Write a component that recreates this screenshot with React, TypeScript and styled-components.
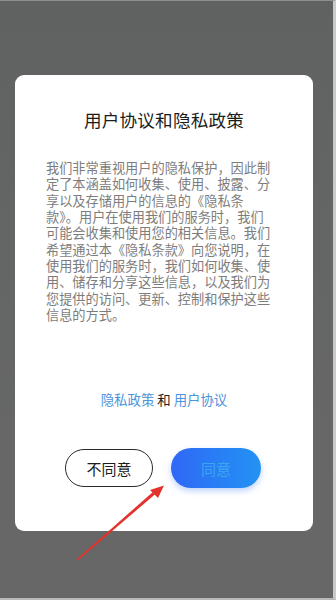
import React from 'react';
import styled, { createGlobalStyle } from 'styled-components';

const GlobalStyle = createGlobalStyle`
  html, body {
    margin: 0;
    padding: 0;
    background: #646665;
  }
  body {
    font-family: "Noto Sans CJK SC", "Noto Sans", sans-serif;
  }
`;

const Screen = styled.div`
  position: relative;
  width: 336px;
  height: 600px;
  box-sizing: border-box;
  background: linear-gradient(180deg, #5f6261 0%, #646665 40%, #676767 100%);
  border-top: 1px solid #8d8f8e;
  border-right: 3px solid #c9cac9;
  border-bottom: 2px solid #b8b9b8;
  padding: 74px 20px 0 15px;
  overflow: hidden;
`;

const Card = styled.div`
  width: 298px;
  height: 456px;
  box-sizing: border-box;
  background: #ffffff;
  border-radius: 9px;
  display: flex;
  flex-direction: column;
  align-items: center;
`;

const Title = styled.h1`
  margin: 33px 0 0;
  font-size: 17.6px;
  line-height: 24px;
  font-weight: 400;
  color: #1c1c1c;
  letter-spacing: 0.2px;
`;

const Body = styled.p`
  align-self: flex-start;
  margin: 28px 0 0 31px;
  width: 226px;
  font-size: 13.2px;
  line-height: 16.35px;
  color: #7d7d7d;
  text-align: left;
`;

const Links = styled.div`
  margin-top: 66px;
  font-size: 13.4px;
  line-height: 20px;
  color: #1c1c1c;
`;

const Link = styled.span`
  color: #4d93dc;
`;

const Buttons = styled.div`
  margin-top: 40px;
  display: flex;
  gap: 18px;
  padding-right: 2px;
`;

const Button = styled.button<{ $primary?: boolean }>`
  width: ${p => (p.$primary ? '90px' : '88px')};
  height: ${p => (p.$primary ? '40px' : '38px')};
  margin-top: ${p => (p.$primary ? '-1px' : '0')};
  border-radius: 20px;
  box-sizing: border-box;
  font-family: inherit;
  font-size: 15px;
  font-weight: 400;
  padding: 0;
  border: ${p => (p.$primary ? 'none' : '1.2px solid #2a2a2a')};
  background: ${p =>
    p.$primary ? 'linear-gradient(90deg, #2f68f6 0%, #2392f4 100%)' : '#ffffff'};
  color: ${p => (p.$primary ? '#3aa6ef' : '#1c1c1c')};
  box-shadow: ${p => (p.$primary ? '0 3px 6px rgba(40, 105, 240, 0.3)' : 'none')};
`;

const Arrow = styled.svg`
  position: absolute;
  left: 0;
  top: 0;
  pointer-events: none;
`;

export default function App() {
  return (
    <>
      <GlobalStyle />
      <Screen>
        <Card>
          <Title>用户协议和隐私政策</Title>
          <Body>
            我们非常重视用户的隐私保护，因此制定了本涵盖如何收集、使用、披露、分享以及存储用户的信息的《隐私条款》。用户在使用我们的服务时，我们可能会收集和使用您的相关信息。我们希望通过本《隐私条款》向您说明，在使用我们的服务时，我们如何收集、使用、储存和分享这些信息，以及我们为您提供的访问、更新、控制和保护这些信息的方式。
          </Body>
          <Links>
            <Link>隐私政策</Link> 和 <Link>用户协议</Link>
          </Links>
          <Buttons>
            <Button>不同意</Button>
            <Button $primary>同意</Button>
          </Buttons>
        </Card>
        <Arrow width="336" height="600" viewBox="0 0 336 600">
          <polygon points="77,558 78,559.2 156,492.5 154,490" fill="#e3322b" />
          <polygon points="164,484.5 150,489 158,497" fill="#e3322b" />
        </Arrow>
      </Screen>
    </>
  );
}
